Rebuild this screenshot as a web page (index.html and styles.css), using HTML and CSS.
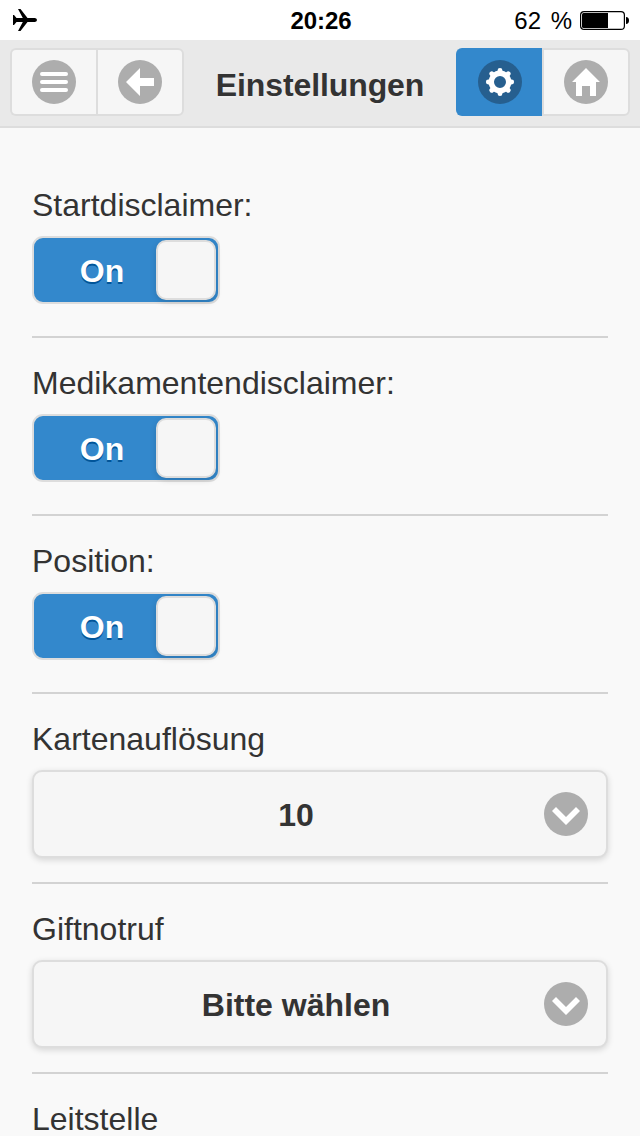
FILE: index.html
```html
<!DOCTYPE html>
<html lang="de">
<head>
<meta charset="utf-8">
<title>Einstellungen</title>
<link rel="stylesheet" href="styles.css">
</head>
<body>
<div class="statusbar">
  <svg class="plane" width="26" height="24" viewBox="0 0 26 24"><path d="M1 7h1l2.500 3h6.300L6 1h2.500L15.500 10H23q2 .3 2 2t-2 2h-7.500L8.500 23H6l4.800-9H4.500L2 17H1z"/></svg>
  <span class="clock">20:26</span>
  <div class="power">
    <span class="percent">62 %</span>
    <svg class="battery" width="50" height="20" viewBox="0 0 50 20"><rect x=".6" y=".6" width="43.800" height="17.800" rx="3.500" fill="none" stroke="#000" stroke-width="1.200"/><path d="M3.500 2H28v15H3.500Q2 17 2 15.500v-12Q2 2 3.500 2z"/><path d="M46 6q3 .3 3 3.500t-3 3.500z"/></svg>
  </div>
</div>
<header class="header">
  <nav class="group">
    <a class="button"><svg class="icon" viewBox="0 0 44 44"><circle class="disc" cx="22" cy="22" r="22"/><path d="M10 14h24M10 22h24M10 30h24" class="bars"/></svg></a>
    <a class="button"><svg class="icon" viewBox="0 0 44 44"><circle class="disc" cx="22" cy="22" r="22"/><path class="glyph" d="M8 22 22 8v10h14v8H22v10z"/></svg></a>
  </nav>
  <h1 class="title">Einstellungen</h1>
  <nav class="group">
    <a class="button active"><svg class="icon" viewBox="0 0 44 44"><circle class="disc" cx="22" cy="22" r="22"/><circle class="gear" cx="22" cy="22" r="8.700"/><path class="teeth" d="M22 12v-1.700M22 32v1.700M12 22h-1.700M32 22h1.700M15 15l-1.200-1.200M29 15l1.200-1.200M15 29l-1.200 1.200M29 29l1.200 1.200"/></svg></a>
    <a class="button"><svg class="icon" viewBox="0 0 44 44"><circle class="disc" cx="22" cy="22" r="22"/><path class="glyph" d="M22 8 36 22h-4v14h-6V26h-8v10h-6V22H8z"/></svg></a>
  </nav>
</header>
<main class="content">
  <section class="field">
    <div class="label">Startdisclaimer:</div>
    <div class="toggle"><span class="on">On</span><span class="handle"></span></div>
  </section>
  <section class="field">
    <div class="label">Medikamentendisclaimer:</div>
    <div class="toggle"><span class="on">On</span><span class="handle"></span></div>
  </section>
  <section class="field">
    <div class="label">Position:</div>
    <div class="toggle"><span class="on">On</span><span class="handle"></span></div>
  </section>
  <section class="field choice">
    <div class="label">Kartenauflösung</div>
    <div class="select"><span class="value">10</span><svg class="icon" viewBox="0 0 44 44"><circle class="disc" cx="22" cy="22" r="22"/><path class="glyph" d="m12 15 10 10 10-10 4 4-14 14L8 19z"/></svg></div>
  </section>
  <section class="field choice">
    <div class="label">Giftnotruf</div>
    <div class="select"><span class="value">Bitte wählen</span><svg class="icon" viewBox="0 0 44 44"><circle class="disc" cx="22" cy="22" r="22"/><path class="glyph" d="m12 15 10 10 10-10 4 4-14 14L8 19z"/></svg></div>
  </section>
  <section class="field">
    <div class="label">Leitstelle</div>
  </section>
</main>
</body>
</html>
```
FILE: styles.css
```css
* { box-sizing: border-box; }
body {
  margin: 0;
  height: 1136px;
  overflow: hidden;
  display: flex;
  flex-direction: column;
  background: #f9f9f9;
  color: #333;
  font-family: "Liberation Sans", Arial, sans-serif;
  font-size: 32px;
}
.statusbar {
  flex: none;
  height: 40px;
  display: grid;
  grid-template-columns: 1fr auto 1fr;
  align-items: center;
  padding: 0 10px 0 12px;
  background: #fff;
  color: #000;
  font-size: 24px;
  line-height: 38px;
}
.clock { font-weight: bold; padding-top: 2px; letter-spacing: -0.1px; }
.power { display: flex; justify-content: flex-end; align-items: center; gap: 8px; }
.percent { word-spacing: 3px; padding-top: 2px; }
.battery { margin-top: 2px; }
.header {
  flex: none;
  height: 88px;
  display: flex;
  justify-content: space-between;
  padding: 8px 10px;
  background: #e9e9e9;
  border-bottom: 2px solid #ddd;
}
.group { display: flex; width: 174px; height: 68px; }
.button {
  width: 88px;
  display: flex;
  align-items: center;
  justify-content: center;
  background: #f6f6f6;
  border: 2px solid #ddd;
}
.button:first-child { border-radius: 6px 0 0 6px; border-right: 0; width: 86px; }
.button:last-child { border-radius: 0 6px 6px 0; }
.button.active { background: #38c; border-color: #38c; }
.icon { display: block; width: 44px; height: 44px; flex: none; }
.disc { fill: #adadad; }
.active .disc { fill: #265f8f; }
.glyph { fill: #fff; }
.bars { fill: none; stroke: #fff; stroke-width: 4; stroke-linecap: round; }
.gear { fill: none; stroke: #fff; stroke-width: 5.400; }
.teeth { fill: none; stroke: #fff; stroke-width: 4.800; stroke-linecap: round; }
.title {
  margin: 0;
  font-size: 32px;
  line-height: 74px;
  letter-spacing: -0.1px;
  text-shadow: 0 2px 0 #eee;
}
.content { flex: none; padding: 32px 32px 0; }
.field { padding: 25px 0 32px; border-bottom: 2px solid #d3d3d3; }
.choice { padding-bottom: 24px; }
.label { height: 40px; line-height: 40px; margin-bottom: 11px; }
.toggle {
  width: 188px;
  height: 68px;
  display: flex;
  align-items: center;
  padding: 0 2px 0 0;
  border: 2px solid #ddd;
  border-radius: 11px;
  background: #38c;
}
.on {
  flex: 1;
  padding: 2px 0 0 14px;
  text-align: center;
  color: #fff;
  font-weight: bold;
  text-shadow: 0 2px 0 #059;
}
.handle {
  width: 60px;
  height: 60px;
  border: 2px solid #ddd;
  border-radius: 10px;
  background: #f6f6f6;
  box-shadow: 0 2px 6px rgba(0, 0, 0, .15);
}
.select {
  height: 88px;
  display: flex;
  align-items: center;
  padding: 0 18px 0 14px;
  border: 2px solid #ddd;
  border-radius: 10px;
  background: #f6f6f6;
  box-shadow: 0 2px 6px rgba(0, 0, 0, .15);
}
.value { flex: 1; padding-top: 2px; text-align: center; font-weight: bold; text-shadow: 0 2px 0 #f3f3f3; }
```
